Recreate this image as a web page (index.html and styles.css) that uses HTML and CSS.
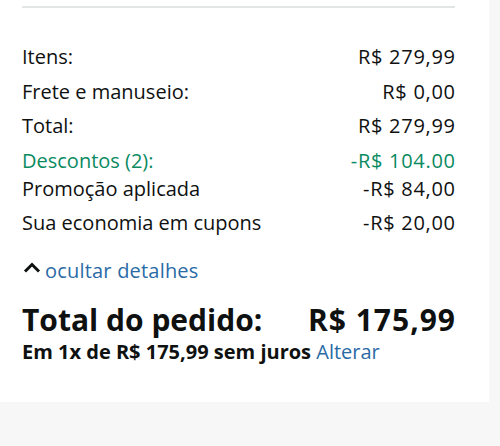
FILE: index.html
```html
<!DOCTYPE html>
<html lang="pt-BR">
<head>
<meta charset="utf-8">
<link rel="stylesheet" href="styles.css">
</head>
<body>
<div class="card">
  <div class="divider"></div>
  <div class="rows">
    <div class="row"><span>Itens:</span><span class="val">R$ 279,99</span></div>
    <div class="row"><span>Frete e manuseio:</span><span class="val">R$ 0,00</span></div>
    <div class="row"><span>Total:</span><span class="val">R$ 279,99</span></div>
    <div class="row green"><span>Descontos (2):</span><span class="val">-R$ 104.00</span></div>
    <div class="row sub"><span>Promoção aplicada</span><span class="val">-R$ 84,00</span></div>
    <div class="row"><span>Sua economia em cupons</span><span class="val">-R$ 20,00</span></div>
  </div>
  <div class="toggle">
    <svg class="caret" width="20" height="11" viewBox="0 0 20 11"><path d="M3 9.5 L10 2.5 L17 9.5" fill="none" stroke="#0f1111" stroke-width="3"/></svg>
    <a class="link">ocultar detalhes</a>
  </div>
  <div class="grand"><span>Total do pedido:</span><span class="price">R$ 175,99</span></div>
  <div class="install">Em 1x de R$ 175,99 sem juros <a class="link">Alterar</a></div>
</div>
</body>
</html>
```
FILE: styles.css
```css
html, body { margin: 0; padding: 0; }
body {
  width: 500px;
  height: 446px;
  background: #f7f7f7;
  font-family: "Open Sans", "Noto Sans", sans-serif;
  color: #0f1111;
  overflow: hidden;
}
.card {
  width: 489px;
  height: 402px;
  background: #fff;
  padding: 6px 34px 0 22px;
  box-sizing: border-box;
}
.divider {
  height: 2px;
  background: #e3e6e6;
}
.rows {
  margin-top: 35px;
  display: flex;
  flex-direction: column;
}
.row {
  display: flex;
  justify-content: space-between;
  font-size: 20px;
  line-height: 28px;
  height: 34.5px;
}
.val { letter-spacing: 0.7px; margin-right: -0.7px; }
.row.green { color: #0a8a5f; height: 28px; }
.toggle {
  margin-top: 13px;
  display: flex;
  align-items: center;
  gap: 3px;
  font-size: 20px;
  line-height: 28px;
  letter-spacing: 0.2px;
}
.caret { margin-top: -6px; }
.link { color: #2a6ba6; }
.grand {
  margin-top: 16px;
  display: flex;
  justify-content: space-between;
  font-size: 30px;
  font-weight: 700;
  line-height: 38px;
}
.price { letter-spacing: 1px; margin-right: -1px; }
.install {
  margin-top: 0;
  font-size: 20px;
  font-weight: 700;
  line-height: 26px;
  letter-spacing: 0;
}
.install .link { font-weight: 400; }
```
